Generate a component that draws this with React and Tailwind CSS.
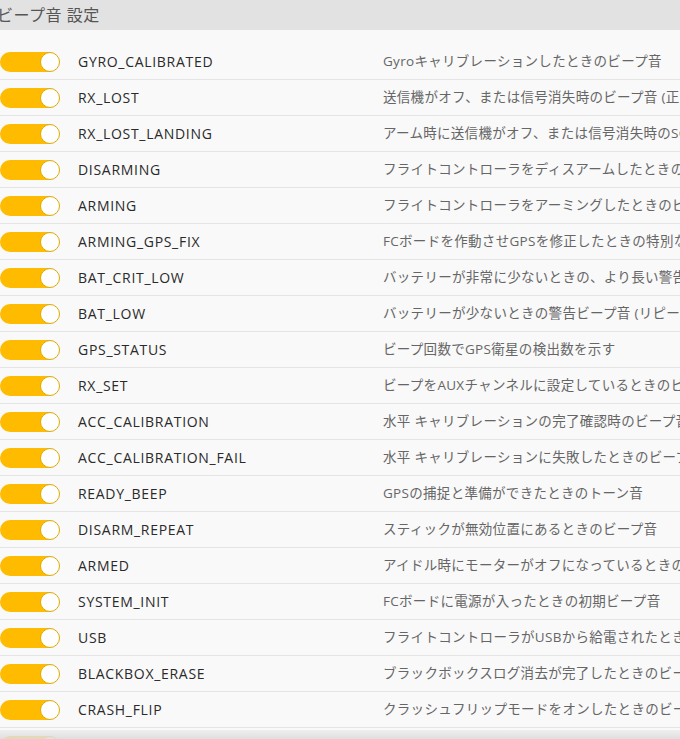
import React from "react";

const rows = [
  ["GYRO_CALIBRATED", "Gyroキャリブレーションしたときのビープ音"],
  ["RX_LOST", "送信機がオフ、または信号消失時のビープ音 (正常に戻るまで繰り返し)"],
  ["RX_LOST_LANDING", "アーム時に送信機がオフ、または信号消失時のSOSビープ音"],
  ["DISARMING", "フライトコントローラをディスアームしたときのビープ音"],
  ["ARMING", "フライトコントローラをアーミングしたときのビープ音"],
  ["ARMING_GPS_FIX", "FCボードを作動させGPSを修正したときの特別なビープ音"],
  ["BAT_CRIT_LOW", "バッテリーが非常に少ないときの、より長い警告ビープ音"],
  ["BAT_LOW", "バッテリーが少ないときの警告ビープ音 (リピート)"],
  ["GPS_STATUS", "ビープ回数でGPS衛星の検出数を示す"],
  ["RX_SET", "ビープをAUXチャンネルに設定しているときのビープ音"],
  ["ACC_CALIBRATION", "水平 キャリブレーションの完了確認時のビープ音"],
  ["ACC_CALIBRATION_FAIL", "水平 キャリブレーションに失敗したときのビープ音"],
  ["READY_BEEP", "GPSの捕捉と準備ができたときのトーン音"],
  ["DISARM_REPEAT", "スティックが無効位置にあるときのビープ音"],
  ["ARMED", "アイドル時にモーターがオフになっているときのビープ音"],
  ["SYSTEM_INIT", "FCボードに電源が入ったときの初期ビープ音"],
  ["USB", "フライトコントローラがUSBから給電されたときのビープ音"],
  ["BLACKBOX_ERASE", "ブラックボックスログ消去が完了したときのビープ音"],
  ["CRASH_FLIP", "クラッシュフリップモードをオンしたときのビープ音"],
];

function Toggle() {
  return (
    <div className="relative w-[60px] h-[20px] shrink-0">
      <div className="absolute left-0 top-0 w-[58px] h-[20px] rounded-full bg-[#ffbb00]" />
      <div className="absolute left-[40px] top-0 w-[20px] h-[20px] rounded-full bg-white border border-[#e0a800]" />
    </div>
  );
}

export default function App() {
  return (
    <div
      className="relative w-[680px] h-[739px] overflow-hidden bg-[#f9f9f9]"
      style={{ fontFamily: '"Open Sans", "Noto Sans CJK JP", sans-serif' }}
    >
      <div className="h-[30px] bg-[#e2e2e2] flex items-center">
        <span className="-ml-[3px] text-[16px] text-[#555] leading-none tracking-[0.5px]">
          ビープ音 設定
        </span>
      </div>
      <div className="pt-[14px]">
        {rows.map(([name, desc]) => (
          <div
            key={name}
            className="h-[36px] flex items-center border-b border-[#e4e4e4] whitespace-nowrap overflow-hidden"
          >
            <Toggle />
            <div className="ml-[18px] w-[305px] shrink-0 text-[14px] text-[#2a2a2a] tracking-[0.7px]">
              {name}
            </div>
            <div className="shrink-0 text-[13.5px] text-[#666] tracking-[0.3px]">{desc}</div>
          </div>
        ))}
        <div className="h-[36px] flex items-center">
          <Toggle />
        </div>
      </div>
      <div className="absolute left-0 right-0 bottom-0 h-[9px] bg-gradient-to-b from-[#e8e8e8]/60 to-[#dcdcdc]/90" />
    </div>
  );
}
